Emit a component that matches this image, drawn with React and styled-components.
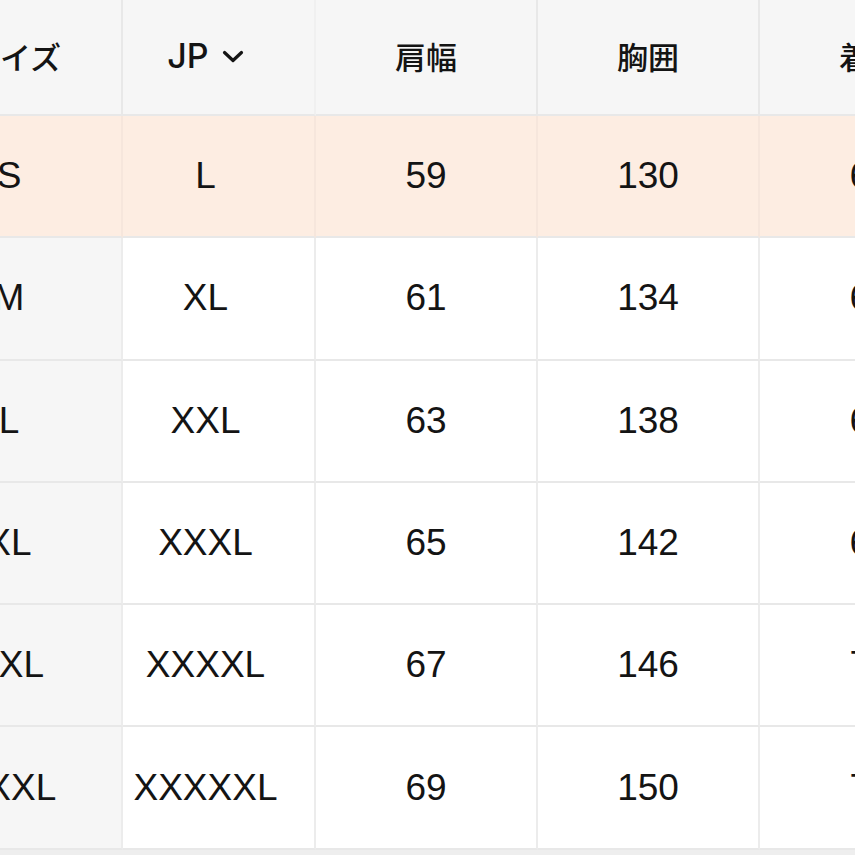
import React from "react";
import styled, { createGlobalStyle } from "styled-components";

const Global = createGlobalStyle`
  html, body { margin: 0; padding: 0; background: #eeeeee; overflow: hidden; }
  body { font-family: "Liberation Sans", "Noto Sans CJK JP", sans-serif; color: #141414; }
`;

const Viewport = styled.div`
  width: 855px;
  height: 855px;
  overflow: hidden;
  background: #eeeeee;
`;

const Table = styled.div`
  display: grid;
  grid-template-columns: 226px 193px 222px 222px 222px;
  margin-left: -103px;
  width: max-content;
  background: #ffffff;
`;

const HeadCell = styled.div`
  box-sizing: border-box;
  height: 116px;
  display: flex;
  align-items: center;
  justify-content: center;
  background: #f6f6f6;
  border-right: 2px solid ${(p) => (p.$faint ? "#f0f0f0" : "#e8e8e8")};
  border-bottom: 2px solid #e8e8e8;
  font-family: "Noto Sans CJK JP", "Liberation Sans", sans-serif;
  font-weight: 500;
  font-size: 31px;
  padding-bottom: 4px;
  padding-left: ${(p) => p.$shift || 0}px;
  padding-right: ${(p) => p.$padRight || 0}px;
  gap: 13px;
`;

const Cell = styled.div`
  box-sizing: border-box;
  height: 122.3px;
  display: flex;
  align-items: center;
  justify-content: center;
  background: ${(p) => (p.$hl ? "#fdede2" : p.$first ? "#f6f6f6" : "#ffffff")};
  border-right: 2px solid ${(p) => (p.$hl ? "#f6e6dc" : "#ececec")};
  border-bottom: 2px solid #e8e8e8;
  font-size: 37px;
  font-weight: 400;
  padding-right: ${(p) => p.$padRight || 0}px;
`;

const LatinHead = styled.span`
  font-family: "Inter", "Liberation Sans", sans-serif;
  font-weight: 500;
  font-size: 34px;
`;

const Chevron = () => (
  <svg width="22" height="14" viewBox="0 0 22 14" style={{ marginTop: 4 }}>
    <path d="M2.5 2.5 L11 10.5 L19.5 2.5" fill="none" stroke="#141414" strokeWidth="3.2" strokeLinecap="round" strokeLinejoin="round" />
  </svg>
);

const rows = [
  ["S", "L", "59", "130", "66"],
  ["M", "XL", "61", "134", "67"],
  ["L", "XXL", "63", "138", "68"],
  ["XL", "XXXL", "65", "142", "69"],
  ["XXL", "XXXXL", "67", "146", "70"],
  ["XXXL", "XXXXXL", "69", "150", "71"],
];

export default function App() {
  return (
    <Viewport>
      <Global />
      <Table>
        <HeadCell $shift={12}>サイズ</HeadCell>
        <HeadCell $padRight={26} $faint>
          <LatinHead>JP</LatinHead>
          <Chevron />
        </HeadCell>
        <HeadCell>肩幅</HeadCell>
        <HeadCell>胸囲</HeadCell>
        <HeadCell>着丈</HeadCell>
        {rows.map((r, i) =>
          r.map((v, j) => (
            <Cell key={`${i}-${j}`} $hl={i === 0} $first={j === 0} $padRight={j === 1 ? 26 : 0}>
              {v}
            </Cell>
          ))
        )}
      </Table>
    </Viewport>
  );
}
